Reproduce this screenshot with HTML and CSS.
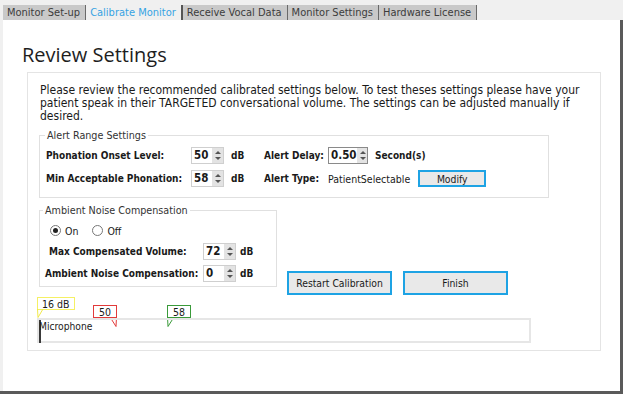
FILE: index.html
```html
<!DOCTYPE html>
<html lang="en">
<head>
    <meta charset="UTF-8">
    <title>Calibrate Monitor</title>
    <link rel="stylesheet" href="styles.css">
</head>
<body>
    <div class="window">
        <div class="tabs">
            <span class="tab">Monitor Set-up</span>
            <span class="tab active">Calibrate Monitor</span>
            <span class="tab">Receive Vocal Data</span>
            <span class="tab">Monitor Settings</span>
            <span class="tab">Hardware License</span>
        </div>

        <div class="page">
            <h1>Review Settings</h1>

            <div class="panel">
                <p class="intro">Please review the recommended calibrated settings below. To test theses settings please have your patient speak in their TARGETED conversational volume. The settings can be adjusted manually if desired.</p>

                <fieldset class="group alert-range">
                    <legend>Alert Range Settings</legend>
                    <div class="alert-grid">
                        <span class="lbl">Phonation Onset Level:</span>
                        <span class="spin"><span class="val">50</span><span class="arrows"></span></span>
                        <span class="lbl">dB</span>
                        <span class="lbl">Alert Delay:</span>
                        <span class="row-end">
                            <span class="spin spin-wide focus"><span class="val">0.50</span><span class="arrows"></span></span>
                            <span class="lbl">Second(s)</span>
                        </span>

                        <span class="lbl">Min Acceptable Phonation:</span>
                        <span class="spin"><span class="val">58</span><span class="arrows"></span></span>
                        <span class="lbl">dB</span>
                        <span class="lbl">Alert Type:</span>
                        <span class="row-end">
                            <span class="plain">PatientSelectable</span>
                            <button class="btn btn-small">Modify</button>
                        </span>
                    </div>
                </fieldset>

                <div class="lower">
                    <fieldset class="group ambient">
                        <legend>Ambient Noise Compensation</legend>
                        <div class="radios">
                            <label class="radio"><span class="dot checked"></span>On</label>
                            <label class="radio"><span class="dot"></span>Off</label>
                        </div>
                        <div class="amb-row amb-max">
                            <span class="lbl">Max Compensated Volume:</span>
                            <span class="spin"><span class="val">72</span><span class="arrows"></span></span>
                            <span class="lbl">dB</span>
                        </div>
                        <div class="amb-row amb-noise">
                            <span class="lbl">Ambient Noise Compensation:</span>
                            <span class="spin"><span class="val">0</span><span class="arrows"></span></span>
                            <span class="lbl">dB</span>
                        </div>
                    </fieldset>

                    <div class="actions">
                        <button class="btn">Restart Calibration</button>
                        <button class="btn">Finish</button>
                    </div>
                </div>

                <div class="meter">
                    <div class="callout yellow">16 dB
                        <svg class="tail" width="8" height="9" viewBox="0 0 8 9"><polyline points="6,0 1,8.5 0.5,0" /></svg>
                    </div>
                    <div class="callout red">50
                        <svg class="tail" width="8" height="10" viewBox="0 0 8 10"><polyline points="1,0 7,9.5 7.5,0" /></svg>
                    </div>
                    <div class="callout green">58
                        <svg class="tail" width="8" height="10" viewBox="0 0 8 10"><polyline points="7,0 1,9.5 0.5,0" /></svg>
                    </div>
                    <div class="meter-bar">
                        <span class="meter-level"></span>
                        <span class="meter-name">Microphone</span>
                    </div>
                </div>
            </div>
        </div>
    </div>
</body>
</html>
```

FILE: styles.css
```css
body {
    margin: 0;
    background: #f0f0f0;
    font-family: "DejaVu Sans Condensed", "DejaVu Sans", sans-serif;
    font-size: 10.5px;
    color: #1a1a1a;
}

.window {
    width: 623px;
    height: 394px;
    display: flex;
    flex-direction: column;
    box-sizing: border-box;
    border-bottom: 3px solid #5a5a5a;
}

/* Tabs */
.tabs {
    height: 20px;
    display: flex;
    align-items: flex-end;
    padding-left: 3px;
}

.tab {
    height: 15px;
    line-height: 15px;
    padding: 0 5px 0 4px;
    font-size: 11px;
    background: #c9c9c9;
    color: #3c3c3c;
    border-right: 1px solid #6a6a6a;
}

.tab.active {
    background: #f0f0f0;
    color: #36a3e3;
    border-right: 2px solid #555;
}

/* Page */
.page {
    flex: 1;
    margin-left: 3px;
    background: #fff;
    border-right: 3px solid #5a5a5a;
    padding: 0 19px 0 24px;
}

h1 {
    margin: 20px 0 0 -5px;
    font-family: "Open Sans", sans-serif;
    font-size: 20px;
    font-weight: 400;
    color: #1e1e1e;
    line-height: 30px;
}

.panel {
    margin-top: 2px;
    border: 1px solid #e4e4e4;
    padding: 11px 12px 7px 11px;
}

.intro {
    margin: 0 0 6px 1px;
    font-size: 12px;
    line-height: 13px;
}

.group {
    margin: 0;
    padding: 0 6px;
    border: 1px solid #e0e0e0;
    box-sizing: border-box;
}

.group legend {
    padding: 0 2px;
    margin-left: -1px;
    font-size: 10.7px;
    line-height: 13px;
    color: #333;
}

.alert-range {
    width: 510px;
    padding-bottom: 10px;
}

.alert-grid {
    display: grid;
    grid-template-columns: 145px 40px 33px 64px 1fr;
    grid-auto-rows: 17px;
    row-gap: 6px;
    align-items: center;
    padding-top: 5px;
}

.lbl {
    font-weight: bold;
    font-size: 10px;
    white-space: nowrap;
}

.plain {
    margin-right: 1px;
}

.row-end {
    display: flex;
    align-items: center;
    gap: 7px;
}

/* Spin boxes */
.spin {
    display: inline-flex;
    width: 33px;
    height: 17px;
    border: 1px solid #cfcfcf;
    background: #fff;
    box-sizing: border-box;
}

.spin-wide {
    width: 40px;
}

.spin.focus {
    border-color: #8a8a8a;
}

.spin .val {
    flex: 1;
    padding-left: 2px;
    line-height: 15px;
    font-weight: bold;
    font-size: 11.5px;
}

.spin .arrows {
    width: 11px;
    background: #e3e3e3;
    position: relative;
}

.spin .arrows::before,
.spin .arrows::after {
    content: "";
    position: absolute;
    left: 3px;
    border-left: 3px solid transparent;
    border-right: 3px solid transparent;
}

.spin .arrows::before {
    top: 3px;
    border-bottom: 3px solid #555;
}

.spin .arrows::after {
    bottom: 3px;
    border-top: 3px solid #555;
}

/* Lower section */
.lower {
    display: flex;
    align-items: flex-end;
    margin-top: 6px;
}

.ambient {
    width: 238px;
    padding: 0 0 4px 4px;
}

.radios {
    display: flex;
    height: 17px;
    gap: 14px;
    padding: 5px 0 0 6px;
}

.radio {
    display: flex;
    align-items: center;
    gap: 4px;
}

.dot {
    width: 9px;
    height: 9px;
    border: 1px solid #777;
    border-radius: 50%;
    background: #fff;
    position: relative;
}

.dot.checked::after {
    content: "";
    position: absolute;
    top: 2px;
    left: 2px;
    width: 5px;
    height: 5px;
    border-radius: 50%;
    background: #222;
}

.amb-row {
    display: flex;
    align-items: center;
    gap: 4px;
    height: 17px;
}

.amb-max {
    margin-top: 4px;
    padding-left: 5px;
}

.amb-max .lbl:first-child {
    width: 150px;
}

.amb-noise {
    margin-top: 5px;
    padding-left: 1px;
}

.amb-noise .lbl:first-child {
    width: 154px;
}

.actions {
    display: flex;
    gap: 11px;
    margin-left: 10px;
    margin-bottom: -8px;
}

.btn {
    width: 105px;
    height: 24px;
    background: #e9e9e9;
    border: 2px solid #1ea3e4;
    font-family: inherit;
    font-size: 10.3px;
    color: #1a1a1a;
    padding: 0;
}

.btn-small {
    width: 68px;
    height: 17px;
    line-height: 12px;
}

/* Meter */
.meter {
    position: relative;
    margin: 10px 0 0 -2px;
    padding-top: 21px;
    width: 494px;
}

.meter-bar {
    height: 25px;
    border: 2px solid #e6e6e6;
    box-sizing: border-box;
    position: relative;
}

.meter-level {
    position: absolute;
    left: 0;
    top: 0;
    bottom: -2px;
    width: 2px;
    background: #3a3a3a;
}

.meter-name {
    position: absolute;
    left: 0;
    top: 1px;
    font-size: 10.2px;
}

.callout {
    position: absolute;
    height: 13px;
    line-height: 12px;
    padding: 0 4px;
    font-size: 10.5px;
    background: #fff;
    box-sizing: border-box;
}

.callout .tail {
    position: absolute;
    top: 11px;
    fill: none;
    stroke-width: 1;
}

.callout.yellow {
    left: 0;
    top: 0;
    width: 38px;
    border: 1px solid #f5f064;
}

.callout.yellow .tail {
    left: -1px;
    stroke: #f0e84a;
}

.callout.red {
    left: 56px;
    top: 8px;
    width: 24px;
    text-align: center;
    border: 1px solid #e23a3a;
}

.callout.red .tail {
    right: -1px;
    stroke: #e23a3a;
}

.callout.green {
    left: 130px;
    top: 8px;
    width: 24px;
    text-align: center;
    border: 1px solid #3a9a3a;
}

.callout.green .tail {
    left: -1px;
    stroke: #3a9a3a;
}
```
